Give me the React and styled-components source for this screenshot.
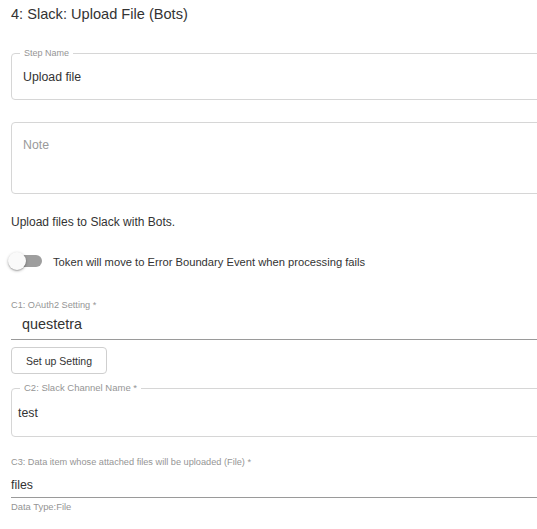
import React from "react";
import styled, { createGlobalStyle } from "styled-components";

const GlobalStyle = createGlobalStyle`
  html, body {
    margin: 0;
    padding: 0;
    background: #ffffff;
    overflow: hidden;
  }
  body {
    font-family: "Liberation Sans", Arial, sans-serif;
    color: #333333;
  }
`;

const Page = styled.div`
  width: 580px;
  padding: 5px 0 0 11px;
  display: flex;
  flex-direction: column;
  align-items: stretch;
`;

const Title = styled.h1`
  margin: 0;
  font-size: 14.6px;
  line-height: 18px;
  font-weight: 400;
  color: #333;
`;

const Outlined = styled.fieldset`
  margin: ${(p) => p.$mt || 0}px 0 0 0;
  padding: 0 ${(p) => p.$px || 11}px;
  border: 1px solid #d6d6d6;
  border-radius: 4px;
  min-width: 0;
`;

const Legend = styled.legend`
  font-size: ${(p) => p.$fs || 9}px;
  line-height: 10px;
  padding: 0 4px;
  margin-left: ${(p) => p.$ml || -3}px;
  color: #959595;
`;

const FieldValue = styled.div`
  font-size: 12.3px;
  line-height: 16px;
  color: #333;
  padding: ${(p) => p.$pt}px 0 ${(p) => p.$pb}px;
`;

const NoteBox = styled.div`
  margin-top: 22px;
  height: 72px;
  box-sizing: border-box;
  border: 1px solid #d6d6d6;
  border-radius: 4px;
  padding: 14px 11px;
  font-size: 12.3px;
  line-height: 16px;
  color: #9a9a9a;
`;

const Description = styled.p`
  margin: 20px 0 0;
  font-size: 12px;
  line-height: 16px;
  color: #333;
`;

const ToggleRow = styled.div`
  margin-top: 22px;
  margin-left: -3px;
  display: flex;
  align-items: center;
  gap: 11px;
`;

const SwitchRoot = styled.span`
  position: relative;
  width: 34px;
  height: 18px;
  flex: none;
`;

const SwitchTrack = styled.span`
  position: absolute;
  left: 2px;
  top: 3px;
  width: 32px;
  height: 12px;
  border-radius: 6px;
  background: #9e9e9e;
`;

const SwitchThumb = styled.span`
  position: absolute;
  left: 0;
  top: 0;
  width: 18px;
  height: 18px;
  border-radius: 50%;
  background: #fafafa;
  box-shadow: 0 1px 3px rgba(0, 0, 0, 0.3), 0 1px 1px rgba(0, 0, 0, 0.14);
`;

const ToggleText = styled.span`
  font-size: 11.2px;
  line-height: 16px;
  padding-top: 2px;
  color: #333;
`;

const SmallLabel = styled.div`
  margin-top: ${(p) => p.$mt || 0}px;
  font-size: 9.2px;
  line-height: 10px;
  color: #959595;
`;

const UnderlinedValue = styled.div`
  margin-top: ${(p) => p.$mt}px;
  padding: 0 0 ${(p) => p.$pb}px ${(p) => p.$pl || 0}px;
  font-size: ${(p) => p.$fs}px;
  line-height: ${(p) => p.$lh}px;
  color: #333;
  border-bottom: 1px solid #9a9a9a;
`;

const Button = styled.button`
  margin-top: 7px;
  align-self: flex-start;
  width: 96px;
  height: 27px;
  box-sizing: border-box;
  border: 1px solid #cfcfcf;
  border-radius: 4px;
  background: #fff;
  font-family: "Liberation Sans", Arial, sans-serif;
  font-size: 10.5px;
  color: #333;
  padding: 0;
  cursor: pointer;
`;

const HelperText = styled.div`
  margin-top: 4px;
  font-size: 9.4px;
  line-height: 10px;
  color: #959595;
`;

export default function App() {
  return (
    <>
      <GlobalStyle />
      <Page>
        <Title>4: Slack: Upload File (Bots)</Title>

        <Outlined $mt={25}>
          <Legend $fs={9}>Step Name</Legend>
          <FieldValue $pt={11} $pb={14}>Upload file</FieldValue>
        </Outlined>

        <NoteBox>Note</NoteBox>

        <Description>Upload files to Slack with Bots.</Description>

        <ToggleRow>
          <SwitchRoot>
            <SwitchTrack />
            <SwitchThumb />
          </SwitchRoot>
          <ToggleText>Token will move to Error Boundary Event when processing fails</ToggleText>
        </ToggleRow>

        <SmallLabel $mt={30}>C1: OAuth2 Setting *</SmallLabel>
        <UnderlinedValue $mt={5} $pb={6} $pl={11} $fs={14.4} $lh={18}>questetra</UnderlinedValue>

        <Button>Set up Setting</Button>

        <Outlined $mt={9} $px={6}>
          <Legend $ml={2} $fs={9.5}>C2: Slack Channel Name *</Legend>
          <FieldValue $pt={12} $pb={15}>test</FieldValue>
        </Outlined>

        <SmallLabel $mt={20}>C3: Data item whose attached files will be uploaded (File) *</SmallLabel>
        <UnderlinedValue $mt={10} $pb={4} $fs={12.3} $lh={16}>files</UnderlinedValue>

        <HelperText>Data Type:File</HelperText>
      </Page>
    </>
  );
}
